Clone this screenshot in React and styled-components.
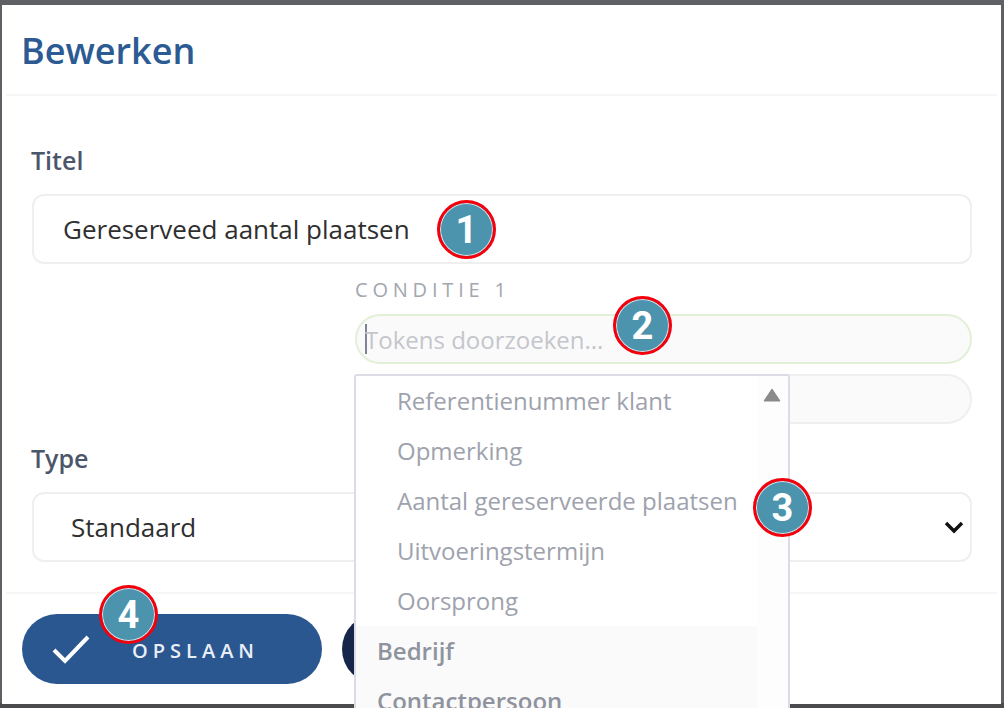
import React from "react";
import styled, { createGlobalStyle } from "styled-components";

const Global = createGlobalStyle`
  html, body { margin: 0; padding: 0; background: #5f6065; }
  body { width: 1004px; height: 708px; overflow: hidden; font-family: "Open Sans", "Liberation Sans", sans-serif; }
  * { box-sizing: border-box; }
`;

const Backdrop = styled.div`
  width: 1004px;
  height: 708px;
  padding: 5px 3px 4px 2px;
  background: linear-gradient(#5f6065 0 703px, #4b4b4d 703px);
  overflow: hidden;
`;

const Modal = styled.div`
  position: relative;
  height: 699px;
  background: #fff;
`;

const Header = styled.header`
  height: 91px;
  margin: 0 4px;
  padding: 22px 0 0 15px;
  border-bottom: 2px solid #f6f6f6;
`;

const Title = styled.h1`
  margin: 0;
  font-size: 36px;
  line-height: 48px;
  font-weight: 600;
  color: #2c5a92;
`;

const Body = styled.div`
  height: 498px;
  margin: 0 4px;
  padding: 47px 25px 0 26px;
  border-bottom: 2px solid #f6f6f6;
`;

const Label = styled.label`
  display: block;
  margin-left: -1px;
  font-size: 25px;
  line-height: 34px;
  font-weight: 600;
  color: #4c566b;
`;

const TextField = styled.div`
  display: flex;
  align-items: center;
  justify-content: space-between;
  height: 70px;
  margin-top: 17px;
  padding: 0 6px 0 ${(p) => p.$inset}px;
  border: 2px solid #efefef;
  border-radius: 12px;
  font-size: 26px;
  color: #2f2f2f;
`;

const Condition = styled.section`
  margin: 13px 0 0 323px;
`;

const ConditionLabel = styled.div`
  font-size: 20px;
  line-height: 26px;
  font-weight: 400;
  letter-spacing: 4.8px;
  color: #a3a6ae;
`;

const Pill = styled.div`
  display: flex;
  align-items: center;
  height: 50px;
  margin-top: ${(p) => p.$gap}px;
  padding: 0 8px;
  border: 2px solid ${(p) => p.$border};
  border-radius: 25px;
  background: #fafafa;
  font-size: 24px;
  color: #c4c6cc;
`;

const Caret = styled.span`
  width: 2px;
  height: 30px;
  margin-right: -2px;
  background: #7d8494;
`;

const TypeBlock = styled.section`
  margin-top: 17px;
`;

const Footer = styled.footer`
  display: flex;
  gap: 20px;
  padding: 20px 0 0 20px;
`;

const SaveButton = styled.button`
  display: flex;
  align-items: center;
  width: 300px;
  height: 70px;
  padding: 0 0 0 30px;
  border: 0;
  border-radius: 35px;
  background: #2b5790;
  color: #e9eef6;
  font-family: inherit;
  font-size: 20px;
  font-weight: 600;
  letter-spacing: 5px;
`;

const ButtonLabel = styled.span`
  margin-left: 42px;
  padding-top: 2px;
`;

const CancelButton = styled.button`
  width: 300px;
  height: 70px;
  border: 0;
  border-radius: 35px;
  background: #16264a;
`;

const Dropdown = styled.div`
  position: absolute;
  left: 352px;
  top: 369px;
  width: 436px;
  height: 334px;
  display: flex;
  background: #fff;
  border: 2px solid #dcdce6;
  border-bottom: 0;
  border-radius: 3px 3px 0 0;
`;

const OptionList = styled.ul`
  flex: 1;
  margin: 0;
  padding: 0;
  list-style: none;
`;

const Option = styled.li`
  height: 50px;
  padding: ${(p) => (p.$group ? "0 0 0 21px" : "0 0 0 41px")};
  background: ${(p) => (p.$group ? "#fafafa" : "#fff")};
  font-size: 24px;
  line-height: 50px;
  font-weight: ${(p) => (p.$group ? 600 : 400)};
  color: ${(p) => (p.$group ? "#8f939e" : "#9ea2ad")};
  white-space: nowrap;
  overflow: hidden;
`;

const Scrollbar = styled.div`
  width: 31px;
  padding: 9px 0 0 6px;
  background: #fdfdfd;
`;

const Badge = styled.div`
  position: absolute;
  left: ${(p) => p.$x - 31}px;
  top: ${(p) => p.$y - 34}px;
  width: 59px;
  height: 59px;
  display: flex;
  align-items: center;
  justify-content: center;
  border: 3px solid #f4000c;
  border-radius: 50%;
  background: #4c94ae;
  box-shadow: inset 0 0 0 1px #d7e6ec;
  color: #fff;
  font-family: Roboto, "Liberation Sans", Arial, sans-serif;
  font-size: 38px;
  font-weight: 700;
`;

const options = [
  "Referentienummer klant",
  "Opmerking",
  "Aantal gereserveerde plaatsen",
  "Uitvoeringstermijn",
  "Oorsprong",
];

const badges = [
  { n: 1, x: 466, y: 229 },
  { n: 2, x: 642, y: 325 },
  { n: 3, x: 782, y: 507 },
  { n: 4, x: 128, y: 614 },
];

export default function App() {
  return (
    <Backdrop>
      <Global />
      <Modal>
        <Header>
          <Title>Bewerken</Title>
        </Header>
        <Body>
          <Label>Titel</Label>
          <TextField $inset={29}>Gereserveed aantal plaatsen</TextField>
          <Condition>
            <ConditionLabel>CONDITIE 1</ConditionLabel>
            <Pill $gap={11} $border="#e3f0d8">
              <Caret />
              Tokens doorzoeken...
            </Pill>
            <Pill $gap={10} $border="#efefef" />
          </Condition>
          <TypeBlock>
            <Label>Type</Label>
            <TextField $inset={37}>
              Standaard
              <svg width="20" height="14" viewBox="0 0 20 14" aria-hidden="true">
                <path d="M2 3l8 8 8-8" fill="none" stroke="#111" strokeWidth="3.4" />
              </svg>
            </TextField>
          </TypeBlock>
        </Body>
        <Footer>
          <SaveButton>
            <svg width="38" height="30" viewBox="0 0 38 30" aria-hidden="true">
              <path d="M2 16l11 11L36 3" fill="none" stroke="#fff" strokeWidth="4" />
            </svg>
            <ButtonLabel>OPSLAAN</ButtonLabel>
          </SaveButton>
          <CancelButton aria-label="Annuleren" />
        </Footer>
        <Dropdown>
          <OptionList>
            {options.map((o) => (
              <Option key={o}>{o}</Option>
            ))}
            <Option $group>Bedrijf</Option>
            <Option $group>Contactpersoon</Option>
          </OptionList>
          <Scrollbar>
            <svg width="18" height="14" viewBox="0 0 18 14" aria-hidden="true">
              <path d="M9 1L17 13H1z" fill="#8a8a8a" stroke="#8a8a8a" strokeLinejoin="round" />
            </svg>
          </Scrollbar>
        </Dropdown>
        {badges.map((b) => (
          <Badge key={b.n} $x={b.x} $y={b.y}>
            {b.n}
          </Badge>
        ))}
      </Modal>
    </Backdrop>
  );
}
